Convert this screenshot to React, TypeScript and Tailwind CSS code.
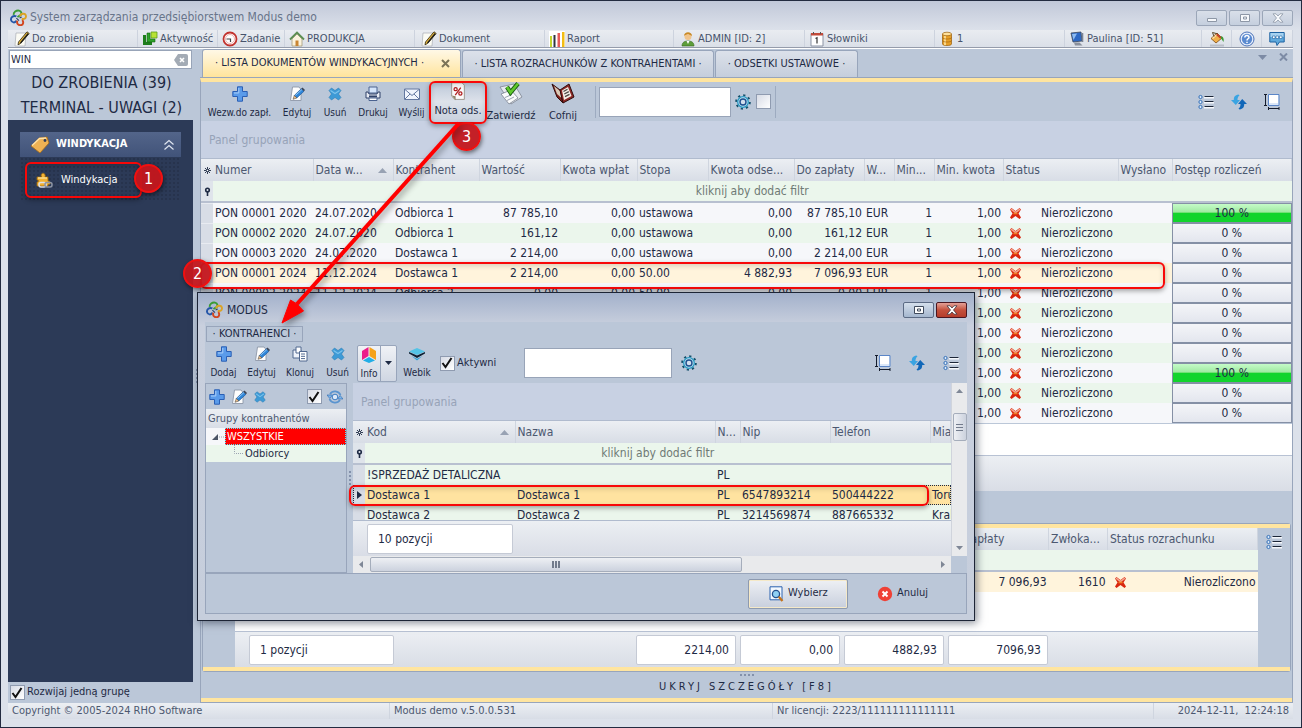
import React from "react";

/* ---------- small drawings ---------- */

type IconProps = { className?: string };

const Logo = ({ className = "size-4" }: IconProps) => (
  <svg viewBox="0 0 16 16" className={className} fill="none" strokeWidth="1.800">
    <path d="M3.500 5.500C3 3 6 1 8.500 1.500 11 2 11.500 4.500 9.500 6L7 7.500" stroke="#3a9b35" />
    <path d="M6 7C3 5.500.5 8 1 10.500c.5 2.500 4 3 5 .5" stroke="#2456a8" />
    <path d="M9.500 7C10 4 14.500 3.500 15 6.500c.3 2.500-2 3.500-4 2.500" stroke="#dba325" />
    <path d="M7 11c-1 2.500.5 4.500 3 4.300 2.700-.3 3-3.300 1.500-4.800" stroke="#d2451e" />
    <path d="M6 8.500 8.500 11M9 8.500l2-1" stroke="#2b3d66" strokeWidth="1" />
  </svg>
);

const NoteIcon = ({ className = "size-4" }: IconProps) => (
  <svg viewBox="0 0 16 16" className={className}>
    <path d="M2 2h10l-1 13H1z" fill="#fbfbf4" stroke="#a9adb5" strokeWidth=".7" />
    <path d="M13 .8 15.200 2.500 6.500 12.500 4 13.800 4.500 11z" fill="#e8b93c" stroke="#2c2410" strokeWidth=".8" />
    <path d="M14.200 2.500 6.500 12" stroke="#1d1d1d" strokeWidth="1.200" />
  </svg>
);

const BlocksIcon = () => (
  <svg viewBox="0 0 16 16" className="size-4">
    <path d="M1 4v10h9v-3H4V4z" fill="#1d7d1c" />
    <path d="M5 2v9h8V8H8V2z" fill="#2fa32b" stroke="#11610f" strokeWidth=".6" />
    <path d="M9 1h6v6H9z" fill="#b8e234" stroke="#5b9c1c" strokeWidth=".8" />
  </svg>
);

const ClockIcon = () => (
  <svg viewBox="0 0 16 16" className="size-4">
    <circle cx="8" cy="8" r="6.500" fill="#fff" stroke="#c2332e" strokeWidth="1.800" />
    <circle cx="8" cy="8" r="4.500" fill="none" stroke="#e8a19e" strokeWidth=".8" />
    <path d="M4.500 8H8.500V11" fill="none" stroke="#444" strokeWidth="1.200" />
  </svg>
);

const HouseIcon = () => (
  <svg viewBox="0 0 16 16" className="size-4">
    <path d="M3 8v7h10V8L8 3z" fill="#fbf3dd" stroke="#9c8f6a" strokeWidth=".7" />
    <path d="M1 8.500 8 1.500l7 7" fill="none" stroke="#5d8f52" strokeWidth="1.800" />
    <path d="M6.500 9.500h3V15h-3z" fill="#c98532" />
  </svg>
);

const BarsIcon = () => (
  <svg viewBox="0 0 16 16" className="size-4">
    <path d="M0 0h16v16H0z" fill="#fff" />
    <path d="M1 5h2v11H1z" fill="#c3d52c" />
    <path d="M4.500 4h2v12h-2z" fill="#2e3440" />
    <path d="M8.500 2h2.500v14H8.500z" fill="#e55b5b" />
    <path d="M13 1h2.500v15H13z" fill="#f2bd14" />
  </svg>
);

const UserIcon = () => (
  <svg viewBox="0 0 16 16" className="size-4">
    <path d="M2 15c0-4 3-5 6-5s6 1 6 5z" fill="#5d9e3a" stroke="#35671d" strokeWidth=".6" />
    <circle cx="8" cy="5.500" r="3.500" fill="#f0c48c" />
    <path d="M4 5c0-5 8-5 8 0-2-1-3-2-4-2S5 4 4 5z" fill="#c98a26" />
    <path d="M6.500 10 8 13l1.500-3z" fill="#fff" />
  </svg>
);

const CalendarIcon = () => (
  <svg viewBox="0 0 16 16" className="size-4">
    <path d="M2 2.500h12V15H2z" fill="#fff" stroke="#8b93a4" />
    <path d="M2 2h12v2.500H2z" fill="#c34b3a" />
    <path d="M6.500 7.500 8 6.800V12.500" fill="none" stroke="#333" strokeWidth="1.200" />
    <path d="M4.500 1v2M11.500 1v2" stroke="#555" />
  </svg>
);

const DatabaseIcon = () => (
  <svg viewBox="0 0 16 16" className="size-4">
    <path d="M3.500 3v10c0 2 9 2 9 0V3z" fill="#e79f27" stroke="#9a5e0b" strokeWidth=".7" />
    <path d="M6 4v10" stroke="#ffe6a3" strokeWidth="1.600" />
    <ellipse cx="8" cy="3" rx="4.500" ry="1.800" fill="#ffe09a" stroke="#9a5e0b" strokeWidth=".7" />
    <path d="M3.500 6.500c0 2 9 2 9 0M3.500 9.500c0 2 9 2 9 0" fill="none" stroke="#9a5e0b" strokeWidth=".6" />
  </svg>
);

const MonitorIcon = () => (
  <svg viewBox="0 0 16 16" className="size-4">
    <path d="M2 2 12 1l1 9-9 1z" fill="#2d68c4" stroke="#3c475b" strokeWidth=".8" />
    <path d="M3 3 8 2.500 4.500 9z" fill="#8ebcf2" />
    <path d="M5 11.500h5.500l3 3H6z" fill="#8a909c" />
    <path d="M12.800 2h1.500v9h-1.500z" fill="#7b8494" />
  </svg>
);

const BucketIcon = () => (
  <svg viewBox="0 0 16 16" className="size-4">
    <path d="M1 13.500h14v2H1z" fill="#b9bec8" />
    <path d="M2 7.500 8 2l5 5-6 5z" fill="#f0b04a" stroke="#7d4a14" strokeWidth=".8" />
    <path d="M3.500 7.500 8 3.500" stroke="#ffe3ac" strokeWidth="1.400" />
    <path d="M5 5.500 3.500 1.500 9 3" fill="none" stroke="#5b4a2b" />
    <path d="M12 5c3 1 3 4 2.500 6-1-1-1.500-3-3-4z" fill="#3a9b35" />
    <path d="M8.500 2.500l4 4-1.500 1-4-3.500z" fill="#c2452b" />
  </svg>
);

const HelpIcon = () => (
  <svg viewBox="0 0 16 16" className="size-4">
    <circle cx="8" cy="8" r="7" fill="#e7eefb" stroke="#4a72b8" />
    <circle cx="8" cy="8" r="5.200" fill="#5a8ad0" />
    <path d="M5.800 6.500C6 3.800 10.200 4 10 6.500 9.900 7.800 8 7.800 8 9.500M8 10.700V12" fill="none" stroke="#fff" strokeWidth="1.500" />
  </svg>
);

const ChatIcon = () => (
  <svg viewBox="0 0 16 16" className="size-4">
    <path d="M.8 1.500h14.400v9.500h-4.700L8 14.500 7 11H.8z" fill="#5fa9dc" stroke="#1e63a2" />
    <path d="M1.500 2h13v4h-13z" fill="#a6d2f0" />
    <path d="M3.500 5h2.500v2.500H3.500zM7 5h2.500v2.500H7zM10.500 5H13v2.500h-2.500z" fill="#fff" stroke="#1e63a2" strokeWidth=".6" />
  </svg>
);

const PlusIcon = ({ className = "size-4" }: IconProps) => (
  <svg viewBox="0 0 16 16" className={className}>
    <path d="M5.500 .8h5v4.700h4.700v5h-4.700v4.700h-5v-4.700H.8v-5h4.700z" fill="#5a9bea" stroke="#2a5fb4" />
    <path d="M6.800 2v5H2" fill="none" stroke="#a8cdf7" />
  </svg>
);

const EditIcon = ({ className = "size-4" }: IconProps) => (
  <svg viewBox="0 0 16 16" className={className}>
    <path d="M3.500 1H10l2 2.500V14.500H1.500z" fill="#fdfdfd" stroke="#8d97a8" strokeWidth=".9" />
    <path d="M12.300 2.700 15 5.200 7.800 12 5.300 9.500z" fill="#2e86d9" stroke="#174f91" strokeWidth=".6" />
    <path d="M6.500 9.300 13 3.500" stroke="#8cc4f5" />
    <path d="M5.300 9.500 7.800 12 4 13.300z" fill="#f3c58d" stroke="#333" strokeWidth=".5" />
    <path d="M12.300 2.700 13.500 1.500 16 4l-1 1.200z" fill="#3a4558" />
  </svg>
);

const DeleteIcon = ({ className = "size-4" }: IconProps) => (
  <svg viewBox="0 0 16 16" className={className}>
    <path
      d="M2 4.500 4.500 2 8 4.500l3.500-2.500L14 4.500 11.500 8l2.500 3.500-2.500 2.500L8 11.500 4.500 14 2 11.500 4.500 8z"
      fill="#3d9ad6"
      stroke="#2c7db5"
      strokeWidth=".6"
    />
    <path d="M3.500 4.500 8 7.500l4.500-3" fill="none" stroke="#7cc3ec" strokeWidth="1.200" />
  </svg>
);

const PrinterIcon = ({ className = "size-4" }: IconProps) => (
  <svg viewBox="0 0 16 16" className={className}>
    <path d="M4 1h8v6H4z" fill="#d4e4fa" stroke="#4a628f" />
    <path d="M1 6h2l1 2h8l1-2h2v6H1z" fill="#e7ebf3" stroke="#2f4169" />
    <path d="M4 9.500h8V11H4z" fill="#2f4169" />
    <path d="M4 12h8v2.500H4z" fill="#fff" stroke="#4a628f" />
  </svg>
);

const MailIcon = ({ className = "size-4" }: IconProps) => (
  <svg viewBox="0 0 16 16" className={className}>
    <path d="M.5 3h15v10.500H.5z" fill="#f1f5fc" stroke="#6478a0" />
    <path d="M1 3.500 8 9.500l7-6M1 13l5-5M15 13l-5-5" fill="none" stroke="#6478a0" />
  </svg>
);

const PercentIcon = ({ className = "size-6" }: IconProps) => (
  <svg viewBox="0 0 24 24" className={className}>
    <path d="M4 1h13l3 3v18H8l-4-4z" fill="#fbfbfb" stroke="#8b8577" />
    <path d="M4 17l5 1v5z" fill="#8f8468" />
    <circle cx="9" cy="9" r="2" fill="none" stroke="#b01f1f" strokeWidth="1.600" />
    <circle cx="15" cy="14.500" r="2" fill="none" stroke="#b01f1f" strokeWidth="1.600" />
    <path d="M15.500 7 8.500 16.500" stroke="#b01f1f" strokeWidth="1.600" />
  </svg>
);

const ApproveIcon = ({ className = "size-6" }: IconProps) => (
  <svg viewBox="0 0 24 24" className={className}>
    <path d="M1 5 15 2l8 13-11 7z" fill="#e6e9ef" stroke="#7c8492" strokeWidth=".8" />
    <path d="M2 12l10-4 7 8-9 6z" fill="#fafbfc" stroke="#7c8492" strokeWidth=".8" />
    <path d="M6 15.500l7-3M8 18.500l7-3.500" stroke="#9aa2b0" />
    <path d="M8 5 11.500 10.500 19 1.500" fill="none" stroke="#1b5e12" strokeWidth="4.400" />
    <path d="M8 5 11.500 10.500 19 1.500" fill="none" stroke="#5fc92c" strokeWidth="2.600" />
  </svg>
);

const BookIcon = ({ className = "size-6" }: IconProps) => (
  <svg viewBox="0 0 24 24" className={className}>
    <path d="M1 2 9 8l3 13L6 15z" fill="#7c1f1c" stroke="#2f0d0c" />
    <path d="M3 4 9 9l1.500 7L6 12z" fill="#d9c9b6" />
    <path d="M9 8 18 2l5 13-11 6z" fill="#8d2825" stroke="#2f0d0c" />
    <path d="M11 8.500 17 5l3.500 9-7.500 4z" fill="#f4f0e8" />
    <path d="M12.500 9.500l4-2.200M13.300 12l4.500-2.300M14 14.600l4.500-2.300" stroke="#4e4a45" strokeWidth="1.300" />
  </svg>
);

const GearIcon = () => (
  <svg viewBox="0 0 16 16" className="size-4">
    <circle cx="8" cy="8" r="6.800" fill="none" stroke="#14506b" strokeWidth="2" strokeDasharray="2.200 3.140" />
    <circle cx="8" cy="8" r="5.300" fill="#bfe3f2" stroke="#2a9ac4" strokeWidth="1.300" />
    <circle cx="8" cy="8" r="3" fill="#d3dfed" stroke="#1e4f8e" strokeWidth="1.400" />
  </svg>
);

const ListIcon = () => (
  <svg viewBox="0 0 16 16" className="size-4">
    <g fill="#dcebfb" stroke="#3470b8">
      <circle cx="2.500" cy="3" r="1.600" />
      <circle cx="2.500" cy="8" r="1.600" />
      <circle cx="2.500" cy="13" r="1.600" />
    </g>
    <path d="M6 3.500h10M6 8.500h10M6 13.500h10" stroke="#f5f8fc" strokeWidth="2" />
    <path d="M6.500 2.500h9M6.500 7.500h9M6.500 12.500h9" stroke="#1c2638" />
  </svg>
);

const RefreshIcon = () => (
  <svg viewBox="0 0 16 16" className="size-4">
    <path d="M7.500 .5C4 1 2.700 3 2.800 6H0l4.800 5L9 6H6.500c0-2 .5-3.500 2-4.500z" fill="#3aa4e2" />
    <path d="M8.500 15.500c3.500-.5 4.800-2.500 4.700-5.500H16l-4.800-5L7 10h2.500c0 2-.5 3.500-2 4.500z" fill="#1167b8" />
  </svg>
);

const SizeIcon = () => (
  <svg viewBox="0 0 16 16" className="size-4">
    <path d="M4.500 .5h10.500v11H4.500z" fill="#dbe7f8" stroke="#5b86c8" />
    <path d="M5 1h9v8H5z" fill="#fff" />
    <path d="M0 .5h3M0 11.500h3M1.500 .5V11.500M4.500 13v3M15 13v3M4.500 14.500h10.500" stroke="#141c2c" fill="none" />
  </svg>
);

const TagIcon = () => (
  <svg viewBox="0 0 20 20" className="size-5">
    <path d="M1 11 9 3l8-1 2 6-9 10z" fill="#eeb254" stroke="#a56a17" strokeWidth=".8" />
    <path d="M2 10.500 9.500 3.500 16 3" fill="none" stroke="#ffe3ac" strokeWidth="1.300" />
    <circle cx="15" cy="5.500" r="1.400" fill="#2d3b58" />
  </svg>
);

const PluginIcon = () => (
  <svg viewBox="0 0 18 18" className="size-[18px]">
    <path d="M2 6h4.500c-2-5 5-5 3.500 0H13v4c3 0 3 4 0 3.500V15H2v-4c2 0 2-2 0-2z" fill="#f3b232" stroke="#9f6a0d" strokeWidth=".8" />
    <path d="M3 7h9" stroke="#ffe39d" strokeWidth="1.300" />
    <rect x="4" y="11.500" width="7" height="4.500" rx="2" fill="none" stroke="#dde1e8" strokeWidth="1.500" />
    <rect x="10" y="11.500" width="7" height="4.500" rx="2" fill="none" stroke="#8d95a5" strokeWidth="1.500" />
  </svg>
);

const CloneIcon = () => (
  <svg viewBox="0 0 16 16" className="size-4">
    <path d="M1 4h8v8H1z" fill="#eef3fb" stroke="#51688f" />
    <path d="M4 1h5v6H4z" fill="#fff" stroke="#51688f" />
    <path d="M7.500 5.500h7.500V15H7.500z" fill="#fff" stroke="#51688f" />
    <path d="M9 8h4M9 10.300h4M9 12.600h4" stroke="#51688f" />
  </svg>
);

const InfoIcon = () => (
  <svg viewBox="0 0 16 16" className="size-4">
    <path d="M7.500 0v9L1 13V4z" fill="#ec1c8a" />
    <path d="M8.500 0v9l6.500 4V4z" fill="#f5a21a" />
    <path d="M8 10 14 13.500 8 16 2 13.500z" fill="#22aee6" />
  </svg>
);

const LayersIcon = () => (
  <svg viewBox="0 0 16 16" className="size-4">
    <path d="M0 5.500 8 2l8 3.500L8 9z" fill="#53c3e6" />
    <path d="M0 6l8 3.500L16 6v1.500L8 12 0 7.500z" fill="#0d2033" />
    <path d="M2.500 10 8 12.800l5.500-2.800L8 14.500z" fill="#2fa0d6" />
  </svg>
);

const SyncIcon = () => (
  <svg viewBox="0 0 16 16" className="size-4">
    <path d="M13.500 6A6 6 0 0 0 3 5M2.500 10A6 6 0 0 0 13 11" fill="none" stroke="#5a94cf" strokeWidth="1.800" />
    <path d="M0 6h5.500L2.800 9.500zM16 10h-5.500l2.700-3.500z" fill="#7db6ea" stroke="#2c66ad" strokeWidth=".6" />
    <circle cx="8" cy="8" r="2.800" fill="#dce9f8" stroke="#3d7cc2" />
  </svg>
);

const FindIcon = () => (
  <svg viewBox="0 0 16 16" className="size-4">
    <path d="M2 .8h12v13H2z" fill="#f3f8fe" stroke="#2a62b0" />
    <circle cx="8" cy="8" r="3.600" fill="#8fd0f4" stroke="#24508d" strokeWidth="1.300" />
    <path d="M10.800 10.800 14.500 15" stroke="#c4731c" strokeWidth="2.200" />
  </svg>
);

const CancelIcon = () => (
  <svg viewBox="0 0 16 16" className="size-4">
    <circle cx="8" cy="8" r="7.200" fill="#ef4136" />
    <path d="M5.500 5.500l5 5M10.500 5.500l-5 5" stroke="#fff" strokeWidth="2" />
  </svg>
);

const RedX = () => (
  <svg viewBox="0 0 11 11" className="block h-[11px] w-[11px]">
    <path d="M0 1.500 1.500 0l4 3 4-3L11 1.500 8.500 5.500 11 9.500 9.500 11l-4-3-4 3L0 9.500l2.500-4z" fill="#d9260f" />
    <path d="M1 1.200 5.500 4.500 10 1.200" fill="none" stroke="#f3a48c" strokeWidth="1.600" />
    <path d="M3.500 5.500h4" stroke="#ef7d22" strokeWidth="1.600" />
  </svg>
);

const Star = () => (
  <svg viewBox="0 0 9 9" className="mx-auto block h-[9px] w-[9px]" stroke="#1e2a44" strokeWidth=".9">
    <path d="M4.500 1v7M1 4.500h7M2 2l5 5M7 2 2 7" fill="none" />
    <circle cx="4.500" cy="4.500" r=".8" fill="#fff" stroke="none" />
  </svg>
);

const FilterKey = () => (
  <svg viewBox="0 0 9 9" className="mx-auto block h-[9px] w-[9px]">
    <circle cx="4.500" cy="3" r="1.800" fill="none" stroke="#1e2a44" strokeWidth="1.600" />
    <path d="M4.500 5v4" stroke="#1e2a44" strokeWidth="1.600" />
  </svg>
);

const SortUp = () => (
  <svg viewBox="0 0 9 5" className="h-[5px] w-[9px]">
    <path d="M0 5 4.500 0 9 5z" fill="#98a2b3" />
  </svg>
);

/* ---------- shared controls ---------- */

const toolText = "text-[#1e2a44]";

function ToolButton({ label, icon, className = "" }: { label: string; icon: React.ReactNode; className?: string }) {
  return (
    <button type="button" className={`flex shrink-0 flex-col items-center gap-1 text-[10px] leading-[14px] whitespace-nowrap ${toolText} ${className}`}>
      {icon}
      {label}
    </button>
  );
}

function CheckBox({ id, label, checked = false }: { id: string; label: string; checked?: boolean }) {
  return (
    <span className="grid size-4 shrink-0 place-items-center">
      <input
        id={id}
        type="checkbox"
        aria-label={label}
        defaultChecked={checked}
        className="peer col-start-1 row-start-1 size-[15px] appearance-none border border-[#8f9bb0] bg-linear-to-br from-[#d8dce6] to-white"
      />
      <svg viewBox="0 0 12 12" className="pointer-events-none col-start-1 row-start-1 hidden size-3 peer-checked:block">
        <path d="M1.500 6 4.500 10 10.500 1" fill="none" stroke="#111" strokeWidth="2" />
      </svg>
    </span>
  );
}

const Grip = () => (
  <span className="flex flex-col gap-[2px]">
    {[0, 1, 2, 3].map((n) => (
      <span key={n} className="size-[2px] bg-[#8391ab]" />
    ))}
  </span>
);

/* ---------- top of the window ---------- */

const menu = [
  { label: "Do zrobienia", icon: <NoteIcon />, pad: "pl-[6px]" },
  { label: "Aktywność", icon: <BlocksIcon />, pad: "pl-[4px]" },
  { label: "Zadanie", icon: <ClockIcon />, pad: "pl-[4px]" },
  { label: "PRODUKCJA", icon: <HouseIcon />, pad: "pl-[4px]" },
  { label: "Dokument", icon: <NoteIcon />, pad: "pl-[6px]" },
  { label: "Raport", icon: <BarsIcon />, pad: "pl-[4px]" },
  { label: "ADMIN [ID: 2]", icon: <UserIcon />, pad: "pl-[6px]" },
  { label: "Słowniki", icon: <CalendarIcon />, pad: "pl-[4px]" },
  { label: "1", icon: <DatabaseIcon />, pad: "pl-[4px]" },
  { label: "Paulina [ID: 51]", icon: <MonitorIcon />, pad: "pl-[4px]" },
];

function TitleBar() {
  return (
    <header className="flex h-[29px] items-start bg-linear-to-b from-[#c1c8d9] to-[#dce1ea] pr-2 pl-[9px]">
      <Logo className="mt-2 size-[17px]" />
      <h1 className="mt-[7px] ml-[3px] flex-1 text-xs leading-[18px] text-[#68748a]">System zarządzania przedsiębiorstwem Modus demo</h1>
      <div className="mt-[9px] flex gap-[2px]">
        {["Minimalizuj", "Maksymalizuj", "Zamknij"].map((name, i) => (
          <button
            key={name}
            type="button"
            aria-label={name}
            className="flex h-4 w-[31px] items-center justify-center rounded-[2px] border border-[#9ba6b8] bg-linear-to-b from-[#d9dfe9] to-[#c5cfde]"
          >
            <svg viewBox="0 0 12 10" className="h-[10px] w-3" fill="#f7f9fc" stroke="#8d97a6">
              {i === 0 && <path d="M1.500 5.500h9v3h-9z" />}
              {i === 1 && <path d="M1.500 1.500h9v7h-9zM4.500 4h3v2h-3z" />}
              {i === 2 && <path d="M1 .8h3L6 3l2-2.200h3L7.500 5 11 9.200H8L6 7 4 9.200H1L4.500 5z" strokeWidth=".8" />}
            </svg>
          </button>
        ))}
      </div>
    </header>
  );
}

function MenuBar() {
  return (
    <nav className="mr-2 ml-[7px] grid h-[18px] grid-cols-[130fr_80fr_67fr_130fr_130fr_129fr_131fr_130fr_130fr_137fr_30fr_30fr_31fr] border-b border-[#959cab] bg-linear-to-b from-[#e9ecf1] to-[#dbe0e8]">
      {menu.map((m) => (
        <button key={m.label} type="button" className={`flex items-center gap-[2px] overflow-hidden border-r border-[#cdd3de] text-[11px] leading-4 whitespace-nowrap text-[#47536b] ${m.pad}`}>
          {m.icon}
          {m.label}
        </button>
      ))}
      {[
        { name: "Motyw", icon: <BucketIcon /> },
        { name: "Pomoc", icon: <HelpIcon /> },
        { name: "Czat", icon: <ChatIcon /> },
      ].map((b) => (
        <button key={b.name} type="button" aria-label={b.name} className="flex items-center justify-center border-r border-[#cdd3de]">
          {b.icon}
        </button>
      ))}
    </nav>
  );
}

/* ---------- left side ---------- */

function Sidebar() {
  return (
    <aside className="flex w-[185px] shrink-0 flex-col">
      <div className="mx-px mt-px flex h-[19px] items-center border border-[#98a4b8] bg-white pr-[3px]">
        <input aria-label="Szukaj w menu" defaultValue="WIN" className={`min-w-0 flex-1 pl-px text-[11px] leading-4 outline-none ${toolText}`} />
        <button type="button" aria-label="Wyczyść">
          <svg viewBox="0 0 14 12" className="h-3 w-[14px]">
            <path d="M4 0h8a2 2 0 0 1 2 2v8a2 2 0 0 1-2 2H4L0 6z" fill="#a3abb5" />
            <path d="M6 4l4 4M10 4l-4 4" stroke="#fff" strokeWidth="1.600" />
          </svg>
        </button>
      </div>
      <div className={`flex flex-col items-center pt-px pl-[2px] text-base leading-[25px] whitespace-nowrap ${toolText}`}>
        <span>DO ZROBIENIA (39)</span>
        <span>TERMINAL - UWAGI (2)</span>
      </div>
      <div className="flex-1 bg-[#2c3a57] px-3 pt-3">
        <button type="button" className="flex h-[25px] w-full items-center bg-linear-to-b from-[#53658a] to-[#415379] pr-[6px] pl-[10px] text-[11px] font-bold text-white">
          <TagIcon />
          <span className="ml-[6px] flex-1 text-left">WINDYKACJA</span>
          <svg viewBox="0 0 12 12" className="size-3" fill="none" stroke="#dfe5f0" strokeWidth="1.200">
            <path d="M1.500 5.500 6 1.500l4.500 4M1.500 10.500l4.500-4 4.500 4" />
          </svg>
        </button>
        <div className="h-[44px] bg-[radial-gradient(#27334d_1px,transparent_1px)] bg-size-[4px_4px] pt-[14px] pl-[15px]">
          <a href="#windykacja" className="flex items-center gap-2 text-[11px] leading-[18px] text-white">
            <PluginIcon />
            Windykacja
          </a>
        </div>
      </div>
      <label htmlFor="one-group" className={`flex h-[21px] items-center gap-[2px] pl-px text-[11px] ${toolText}`}>
        <CheckBox id="one-group" label="Rozwijaj jedną grupę" checked />
        Rozwijaj jedną grupę
      </label>
    </aside>
  );
}

/* ---------- document list ---------- */

interface DocRow {
  no: string;
  date: string;
  who: string;
  value: string;
  paid: string;
  rate: string;
  interest: string;
  due: string;
  cur: string;
  min: string;
  progress: number;
}

const blank: DocRow = { no: "", date: "", who: "", value: "", paid: "", rate: "", interest: "", due: "", cur: "", min: "", progress: 0 };

const docs: DocRow[] = [
  { no: "PON 00001 2020", date: "24.07.2020", who: "Odbiorca 1", value: "87 785,10", paid: "0,00", rate: "ustawowa", interest: "0,00", due: "87 785,10", cur: "EUR", min: "1", progress: 100 },
  { no: "PON 00002 2020", date: "24.07.2020", who: "Odbiorca 1", value: "161,12", paid: "0,00", rate: "ustawowa", interest: "0,00", due: "161,12", cur: "EUR", min: "1", progress: 0 },
  { no: "PON 00003 2020", date: "24.07.2020", who: "Dostawca 1", value: "2 214,00", paid: "0,00", rate: "ustawowa", interest: "0,00", due: "2 214,00", cur: "EUR", min: "1", progress: 0 },
  { no: "PON 00001 2024", date: "11.12.2024", who: "Dostawca 1", value: "2 214,00", paid: "0,00", rate: "50.00", interest: "4 882,93", due: "7 096,93", cur: "EUR", min: "1", progress: 0 },
  { no: "PON 00002 2024", date: "11.12.2024", who: "Odbiorca 2", value: "0,00", paid: "0,00", rate: "50.00", interest: "0,00", due: "0,00", cur: "EUR", min: "1", progress: 0 },
  blank,
  blank,
  blank,
  { ...blank, progress: 100 },
  blank,
  blank,
];

const docHeads = ["Numer", "Data w...", "Kontrahent", "Wartość", "Kwota wpłat", "Stopa", "Kwota odse...", "Do zapłaty", "W...", "Min...", "Min. kwota", "Status", "Wysłano", "Postęp rozliczeń"];

const headCell = "overflow-hidden border-r border-[#cfd5df] p-0 px-[2px] text-left font-normal whitespace-nowrap";

function Progress({ value }: { value: number }) {
  return (
    <div className="flex h-5 items-center justify-center border border-[#8590a5] bg-linear-to-b from-[#f4f5f8] to-[#e3e6ee]">
      <div
        className={
          value === 100
            ? "h-full w-full bg-linear-to-b from-[#c5fbc8] from-0% via-[#a0eaa2] via-45% to-[#12d42c] to-50% text-center leading-[18px]"
            : "leading-[18px]"
        }
      >
        {value} %
      </div>
    </div>
  );
}

function DocTable() {
  const num = "p-0 pr-[2px] text-right";
  const txt = "p-0 pl-[2px]";
  return (
    <table className="w-full table-fixed border-collapse text-xs whitespace-nowrap text-[#1e2a44]">
      <colgroup>
        <col className="w-[12px]" />
        <col className="w-[100px]" />
        <col className="w-[80px]" />
        <col className="w-[86px]" />
        <col className="w-[81px]" />
        <col className="w-[77px]" />
        <col className="w-[71px]" />
        <col className="w-[86px]" />
        <col className="w-[70px]" />
        <col className="w-[30px]" />
        <col className="w-[40px]" />
        <col className="w-[69px]" />
        <col className="w-[115px]" />
        <col className="w-[54px]" />
        <col />
      </colgroup>
      <thead className="text-[#4c5870]">
        <tr className="h-[22px] bg-linear-to-b from-[#eceff3] to-[#d8dde6]">
          <th aria-label="Zaznaczenie" className="p-0">
            <Star />
          </th>
          {docHeads.map((h) => (
            <th key={h} className={headCell}>
              {h === "Data w..." ? (
                <span className="flex items-center justify-between pr-1">
                  {h}
                  <SortUp />
                </span>
              ) : (
                h
              )}
            </th>
          ))}
        </tr>
        <tr className="h-5 bg-[#ebf6ec]">
          <td className="bg-[#dfe4eb] p-0">
            <FilterKey />
          </td>
          <td colSpan={14} className="p-0 text-center text-[#6f7a75]">
            kliknij aby dodać filtr
          </td>
        </tr>
        <tr className="h-[2px] bg-[#b8c0d0]">
          <td colSpan={15} className="h-[2px] p-0" />
        </tr>
      </thead>
      <tbody>
        {docs.map((d, i) => (
          <tr key={i} className={`h-5 ${i === 3 ? "bg-[#fff4dc]" : i % 2 ? "bg-[#ebf6ec]" : "bg-[#f6f7fa]"}`}>
            <td className="border-y border-[#e8ebf1] bg-[#d8dde6] p-0" />
            <td className={txt}>{d.no}</td>
            <td className={txt}>{d.date}</td>
            <td className={txt}>{d.who}</td>
            <td className={num}>{d.value}</td>
            <td className={num}>{d.paid}</td>
            <td className={txt}>{d.rate}</td>
            <td className={num}>{d.interest}</td>
            <td className={num}>{d.due}</td>
            <td className={txt}>{d.cur}</td>
            <td className={num}>{d.min}</td>
            <td className={num}>1,00</td>
            <td className="p-0 pl-[7px]">
              <span className="flex items-center gap-5">
                <RedX />
                Nierozliczono
              </span>
            </td>
            <td className="p-0" />
            <td className="p-0">
              <Progress value={d.progress} />
            </td>
          </tr>
        ))}
      </tbody>
    </table>
  );
}

const bigTool = "flex shrink-0 flex-col items-center text-[11px] leading-5 whitespace-nowrap";

function Toolbar() {
  return (
    <div className="flex h-[39px] items-start overflow-hidden bg-[#bbc7d8] pr-3">
      <ToolButton label="Wezw.do zapł." icon={<PlusIcon />} className="w-[77px] pt-1" />
      <ToolButton label="Edytuj" icon={<EditIcon />} className="w-[38px] pt-1" />
      <ToolButton label="Usuń" icon={<DeleteIcon />} className="w-[38px] pt-1" />
      <ToolButton label="Drukuj" icon={<PrinterIcon />} className="w-[38px] pt-1" />
      <ToolButton label="Wyślij" icon={<MailIcon />} className="w-[39px] pt-1" />
      <button type="button" className={`h-[39px] w-[54px] bg-linear-to-b from-[#bbc7d8] via-[#dde2ea] to-[#c9d1de] ${bigTool} ${toolText}`}>
        <PercentIcon />
        Nota ods.
      </button>
      <button type="button" className={`w-[52px] ${bigTool} ${toolText}`}>
        <ApproveIcon />
        Zatwierdź
      </button>
      <button type="button" className={`w-[52px] ${bigTool} ${toolText}`}>
        <BookIcon />
        Cofnij
      </button>
      <div className="ml-[6px] flex h-8 items-center self-center border-x border-[#9dabc0] pr-1 pl-[3px]">
        <input aria-label="Szukaj dokumentu" className="h-[30px] w-[132px] border border-[#98a4b8] bg-white px-1 text-xs outline-none" />
        <button type="button" aria-label="Ustawienia szukania" className="mx-1">
          <GearIcon />
        </button>
        <CheckBox id="doc-all" label="Wszystkie" />
      </div>
      <div className="ml-auto flex gap-[17px] self-center">
        <button type="button" aria-label="Kolumny"><ListIcon /></button>
        <button type="button" aria-label="Odśwież"><RefreshIcon /></button>
        <button type="button" aria-label="Dopasuj"><SizeIcon /></button>
      </div>
    </div>
  );
}

function Tabs() {
  const idle = "h-[27px] rounded-t-[3px] border border-b-0 border-[#98a5bb] bg-linear-to-b from-[#dce1ea] to-[#c5cedc]";
  return (
    <div role="tablist" className={`flex h-[29px] items-end gap-px border-b border-[#98a5bb] pl-[2px] text-[11px] whitespace-nowrap ${toolText}`}>
      <div role="tab" aria-selected="true" className="flex h-7 w-[259px] items-center justify-between rounded-t-[3px] border border-b-0 border-[#98a5bb] bg-linear-to-b from-[#fff8e6] to-[#ffe49b] pr-[10px] pl-3">
        <span>· LISTA DOKUMENTÓW WINDYKACYJNYCH ·</span>
        <button type="button" aria-label="Zamknij zakładkę">
          <svg viewBox="0 0 9 9" className="h-[9px] w-[9px]">
            <path d="M1 1l7 7M8 1 1 8" stroke="#7b7357" strokeWidth="2" />
          </svg>
        </button>
      </div>
      <button type="button" role="tab" className={`w-[252px] ${idle}`}>· LISTA ROZRACHUNKÓW Z KONTRAHENTAMI ·</button>
      <button type="button" role="tab" className={`w-[143px] ${idle}`}>· ODSETKI USTAWOWE ·</button>
      <div className="mr-[5px] mb-4 ml-auto flex items-center gap-3">
        <button type="button" aria-label="Lista zakładek">
          <svg viewBox="0 0 9 5" className="h-[5px] w-[9px]"><path d="M0 0h9L4.500 5z" fill="#7d8ba5" /></svg>
        </button>
        <button type="button" aria-label="Zamknij">
          <svg viewBox="0 0 9 8" className="h-2 w-[9px]"><path d="M1 .5l7 7M8 .5l-7 7" stroke="#7d8ba5" strokeWidth="2" /></svg>
        </button>
      </div>
    </div>
  );
}

/* ---------- details under the list ---------- */

const sum = "flex h-[30px] items-center rounded-[2px] border border-[#c5cad5] bg-white";

function Details() {
  return (
    <section className="mx-px rounded-[3px] border border-[#98a5bb]">
      <div className="border-y-4 border-[#ffe5a0] px-8">
        <div className="relative">
          <table className="w-full table-fixed border-collapse bg-white text-xs whitespace-nowrap text-[#1e2a44]">
            <colgroup>
              <col />
              <col className="w-[104px]" />
              <col className="w-[59px]" />
              <col className="w-[150px]" />
            </colgroup>
            <thead className="text-[#4c5870]">
              <tr className="h-[22px] bg-linear-to-b from-[#eceff3] to-[#d8dde6]">
                <th aria-label="Dokument" className="p-0" />
                <th className={headCell}>Do zapłaty</th>
                <th className={headCell}>Zwłoka...</th>
                <th className={headCell}>Status rozrachunku</th>
              </tr>
              <tr className="h-5 bg-[#ebf6ec]">
                <td colSpan={4} className="p-0" />
              </tr>
              <tr className="h-[2px] bg-[#b8c0d0]">
                <td colSpan={4} className="h-[2px] p-0" />
              </tr>
            </thead>
            <tbody>
              <tr className="h-5 bg-[#fff4dc]">
                <td className="p-0" />
                <td className="p-0 pr-[2px] text-right">7 096,93</td>
                <td className="p-0 pr-[2px] text-right">1610</td>
                <td className="p-0 pr-[2px] pl-[7px]">
                  <span className="flex items-center justify-between">
                    <RedX />
                    Nierozliczono
                  </span>
                </td>
              </tr>
            </tbody>
          </table>
          <button type="button" aria-label="Kolumny szczegółów" className="absolute top-[6px] -right-6">
            <ListIcon />
          </button>
        </div>
        <div className="h-[39px] bg-white" />
        <div className={`flex h-9 items-center gap-1 border-t border-[#b8c2d4] bg-linear-to-b from-[#eceff3] to-[#d9dde6] pl-[14px] text-xs ${toolText}`}>
          <div className={`w-[145px] pl-[10px] ${sum}`}>1 pozycji</div>
          <div className="w-[234px]" />
          {["2214,00", "0,00", "4882,93", "7096,93"].map((v) => (
            <div key={v} className={`w-[100px] justify-end pr-[6px] ${sum}`}>{v}</div>
          ))}
        </div>
      </div>
    </section>
  );
}

/* ---------- customer picker ---------- */

const customers = [
  { kod: "!SPRZEDAŻ DETALICZNA", name: "", nip: "", tel: "", city: "" },
  { kod: "Dostawca 1", name: "Dostawca 1", nip: "6547893214", tel: "500444222", city: "Toruń" },
  { kod: "Dostawca 2", name: "Dostawca 2", nip: "3214569874", tel: "887665332", city: "Kraków" },
];

function GroupTree() {
  return (
    <div className="flex w-[142px] shrink-0 flex-col border border-[#98a5bb]">
      <div className="flex h-[25px] items-center gap-[6px] px-[3px]">
        <button type="button" aria-label="Dodaj grupę"><PlusIcon /></button>
        <button type="button" aria-label="Edytuj grupę"><EditIcon /></button>
        <button type="button" aria-label="Usuń grupę"><DeleteIcon className="size-[14px]" /></button>
        <span className="ml-auto flex items-center gap-[5px]">
          <CheckBox id="groups-all" label="Pokaż grupy" checked />
          <button type="button" aria-label="Odśwież grupy"><SyncIcon /></button>
        </span>
      </div>
      <div className="h-[19px] bg-linear-to-b from-[#eceff3] to-[#d8dde6] pl-[2px] text-[11px] leading-[19px] text-[#4c5870]">Grupy kontrahentów</div>
      <div className="flex h-[17px] items-center bg-[#f6f7fa] text-[11px] leading-[17px] text-white">
        <svg viewBox="0 0 19 9" className="h-[9px] w-[19px]">
          <path d="M12 2v6H6z" fill="#4c5566" />
          <path d="M13 5h6" stroke="#9aa2b0" strokeDasharray="1 1" />
        </svg>
        <span className="h-full flex-1 border border-dotted border-cyan-300 bg-[#ff0000] pl-px leading-[15px]">WSZYSTKIE</span>
      </div>
      <div className={`flex h-[17px] items-center gap-[2px] bg-[#ebf6ec] pl-7 text-[11px] leading-[17px] ${toolText}`}>
        <svg viewBox="0 0 9 17" className="h-[17px] w-[9px]"><path d="M.5 0v8.500H9" fill="none" stroke="#9aa2b0" strokeDasharray="1 1" /></svg>
        Odbiorcy
      </div>
    </div>
  );
}

function CustomerGrid() {
  return (
    <div className="flex min-w-0 flex-1 flex-col">
      <div className="h-[38px] border-b border-[#b0bbce] bg-[#c8d1e3] pl-2 text-xs leading-[38px] text-[#97a3b8]">Panel grupowania</div>
      <div className="h-[99px] overflow-hidden">
        <table className={`w-full table-fixed border-collapse text-xs whitespace-nowrap ${toolText}`}>
          <colgroup>
            <col className="w-[12px]" />
            <col className="w-[150px]" />
            <col className="w-[200px]" />
            <col className="w-[25px]" />
            <col className="w-[90px]" />
            <col className="w-[100px]" />
            <col />
          </colgroup>
          <thead className="text-[#4c5870]">
            <tr className="h-[22px] bg-linear-to-b from-[#eceff3] to-[#d8dde6]">
              <th aria-label="Zaznaczenie" className="p-0"><Star /></th>
              <th className={headCell}>
                <span className="flex items-center justify-between pr-1">Kod <SortUp /></span>
              </th>
              <th className={headCell}>Nazwa</th>
              <th className={headCell}>N...</th>
              <th className={headCell}>Nip</th>
              <th className={headCell}>Telefon</th>
              <th className={headCell}>Mia</th>
            </tr>
            <tr className="h-5 bg-[#ebf6ec]">
              <td className="bg-[#dfe4eb] p-0"><FilterKey /></td>
              <td colSpan={6} className="p-0 text-center text-[#6f7a75]">kliknij aby dodać filtr</td>
            </tr>
            <tr className="h-[2px] bg-[#b8c0d0]">
              <td colSpan={7} className="h-[2px] p-0" />
            </tr>
          </thead>
          <tbody>
            {customers.map((c, i) => (
              <tr key={c.kod} className={`h-5 ${i === 1 ? "bg-[#ffe3a0] outline outline-dotted outline-[#1e2a44] -outline-offset-1" : "bg-[#ebf6ec]"}`}>
                <td className="bg-[#d8dde6] p-0">
                  {i === 1 && (
                    <svg viewBox="0 0 5 8" className="mx-auto block h-2 w-[5px]"><path d="M0 0v8l5-4z" fill="#1e2a44" /></svg>
                  )}
                </td>
                <td className="p-0 pl-[2px]">{c.kod}</td>
                <td className="p-0 pl-[2px]">{c.name}</td>
                <td className="p-0 pl-[2px]">PL</td>
                <td className="p-0 pl-[2px]">{c.nip}</td>
                <td className="p-0 pl-[2px]">{c.tel}</td>
                <td className="overflow-hidden p-0 pl-[2px]">{c.city}</td>
              </tr>
            ))}
          </tbody>
        </table>
      </div>
      <div className={`flex h-9 items-center border-t border-[#b0bbce] bg-linear-to-b from-[#eceff3] to-[#d9dde6] pl-[14px] text-xs ${toolText}`}>
        <div className={`w-[146px] pl-[10px] ${sum}`}>10 pozycji</div>
      </div>
      <div className="flex h-[17px] items-center gap-[7px] bg-[#e9eaec] px-[6px]">
        <svg viewBox="0 0 4 7" className="h-[7px] w-1"><path d="M4 0v7L0 3.500z" fill="#7f8796" /></svg>
        <div className="flex h-[15px] w-[372px] items-center justify-center gap-px rounded-[2px] border border-[#a5adbb] bg-linear-to-b from-[#eef0f4] to-[#ccd2de]">
          {[0, 1, 2].map((n) => (
            <span key={n} className="h-[7px] w-[2px] bg-[#727b8c]" />
          ))}
        </div>
        <svg viewBox="0 0 4 7" className="ml-auto h-[7px] w-1"><path d="M0 0v7l4-3.500z" fill="#7f8796" /></svg>
      </div>
    </div>
  );
}

function CustomerDialog() {
  return (
    <section
      role="dialog"
      aria-label="MODUS"
      className="absolute top-[291px] left-[196px] flex w-[778px] flex-col border border-[#1d2536] bg-linear-to-b from-[#a3b1cb] via-[#c9d0de] via-10% to-[#c6cedc] px-[7px] pb-[6px] shadow-[2px_2px_8px_rgba(20,30,50,0.5)]"
    >
      <header className="flex h-[29px] items-center gap-1 pt-1 pl-px">
        <Logo className="size-[17px]" />
        <h2 className={`flex-1 text-xs ${toolText}`}>MODUS</h2>
        <button type="button" aria-label="Maksymalizuj okno" className="flex h-4 w-[31px] items-center justify-center rounded-[2px] border border-[#5c6b85] bg-linear-to-b from-[#d5dfec] to-[#a5b7cf]">
          <svg viewBox="0 0 12 10" className="h-[10px] w-3" fill="#fff" stroke="#3f4a5d"><path d="M1.500 1.500h9v7h-9zM4.500 4h3v2h-3z" /></svg>
        </button>
        <button type="button" aria-label="Zamknij okno" className="-ml-[2px] flex h-4 w-[31px] items-center justify-center rounded-[2px] border border-[#4a1620] bg-linear-to-b from-[#e3a097] via-[#c4503c] to-[#b53d2b]">
          <svg viewBox="0 0 12 10" className="h-[10px] w-3" fill="#fff" stroke="#43343b" strokeWidth=".8"><path d="M1 .8h3L6 3l2-2.200h3L7.500 5 11 9.200H8L6 7 4 9.200H1L4.500 5z" /></svg>
        </button>
      </header>

      <div className="bg-[#bbc7d8] pt-1">
        <button type="button" className={`ml-px flex h-4 w-[97px] items-center justify-center border border-[#98a5bb] text-[11px] whitespace-nowrap ${toolText}`}>· KONTRAHENCI ·</button>

        <div className="flex h-[41px] items-center pt-px pr-2">
          <ToolButton label="Dodaj" icon={<PlusIcon />} className="w-[37px]" />
          <ToolButton label="Edytuj" icon={<EditIcon />} className="w-[39px]" />
          <ToolButton label="Klonuj" icon={<CloneIcon />} className="w-[38px]" />
          <ToolButton label="Usuń" icon={<DeleteIcon />} className="w-[37px]" />
          <div className="ml-px flex h-[37px] rounded-[2px] border border-[#98a5bb] bg-linear-to-b from-[#f0f2f6] to-[#cfd6e2]">
            <ToolButton label="Info" icon={<InfoIcon />} className="w-[22px] pt-px" />
            <button type="button" aria-label="Więcej informacji" className="flex w-4 items-center justify-center border-l border-[#98a5bb]">
              <svg viewBox="0 0 7 4" className="h-1 w-[7px]"><path d="M0 0h7L3.500 4z" fill="#1e2a44" /></svg>
            </button>
          </div>
          <ToolButton label="Webik" icon={<LayersIcon />} className="w-[40px]" />
          <label htmlFor="active-only" className={`ml-[2px] flex items-center gap-[2px] text-[11px] ${toolText}`}>
            <CheckBox id="active-only" label="Aktywni" checked />
            Aktywni
          </label>
          <input aria-label="Szukaj kontrahenta" className="ml-7 h-[30px] w-[148px] border border-[#98a4b8] bg-white px-1 text-xs outline-none" />
          <button type="button" aria-label="Ustawienia" className="ml-[9px]"><GearIcon /></button>
          <span className="ml-auto flex items-center gap-[18px]">
            <button type="button" aria-label="Dopasuj okno"><SizeIcon /></button>
            <button type="button" aria-label="Odśwież listę"><RefreshIcon /></button>
            <button type="button" aria-label="Kolumny listy"><ListIcon /></button>
          </span>
        </div>

        <div className="flex">
          <GroupTree />
          <div className="flex w-[6px] items-center justify-center"><Grip /></div>
          <CustomerGrid />
          <div className="mb-[17px] flex w-4 flex-col items-center border-l border-[#d0d4dc] bg-[#e9eaec] py-[6px]">
            <svg viewBox="0 0 7 4" className="h-1 w-[7px]"><path d="M0 4h7L3.500 0z" fill="#7f8796" /></svg>
            <div className="mt-5 flex h-7 w-[14px] flex-col items-center justify-center gap-[2px] rounded-[2px] border border-[#a5adbb] bg-linear-to-r from-[#eef0f4] to-[#ccd2de]">
              {[0, 1, 2].map((n) => (
                <span key={n} className="h-px w-[7px] bg-[#727b8c]" />
              ))}
            </div>
            <svg viewBox="0 0 7 4" className="mt-auto h-1 w-[7px]"><path d="M0 0h7L3.500 4z" fill="#7f8796" /></svg>
          </div>
        </div>

        <footer className={`flex h-[41px] items-center justify-end gap-[29px] border border-[#98a5bb] pr-[38px] text-[11px] ${toolText}`}>
          <button type="button" className="flex h-[30px] w-[100px] items-center justify-center gap-1 rounded-[2px] border border-[#8d9ab0] bg-linear-to-b from-[#eef0f4] to-[#c8cfdd] shadow-[inset_0_0_0_1px_#f5e9c8]">
            <FindIcon />
            Wybierz
          </button>
          <button type="button" className="flex items-center gap-1">
            <CancelIcon />
            Anuluj
          </button>
        </footer>
      </div>
    </section>
  );
}

/* ---------- instruction marks ---------- */

const mark = "pointer-events-none absolute rounded-[6px] border-2 border-[#f80808] shadow-[0_2px_5px_rgba(0,0,0,0.35),inset_0_2px_5px_rgba(0,0,0,0.15)]";
const dot = "pointer-events-none absolute flex size-[29px] items-center justify-center rounded-full border-2 border-[#f01010] bg-[#c4161c]/95 text-base text-white shadow-[1px_2px_4px_rgba(0,0,0,0.5)]";

function Marks() {
  return (
    <>
      <div className={`top-[161px] left-[24px] h-[36px] w-[117px] ${mark}`} />
      <div className={`top-[163px] left-[133px] ${dot}`}>1</div>
      <div className={`top-[80px] left-[428px] h-[43px] w-[58px] ${mark}`} />
      <div className={`top-[121px] left-[451px] ${dot}`}>3</div>
      <div className={`top-[484px] left-[348px] h-[21px] w-[580px] ${mark}`} />
      <svg viewBox="0 0 200 210" className="pointer-events-none absolute top-[119px] left-[271px] h-[210px] w-[200px] drop-shadow-[2px_3px_3px_rgba(0,0,0,0.4)]">
        <path d="M187 3 25 184" stroke="#ff0000" strokeWidth="4" />
        <path d="M10 203 18.500 180 25 184 31.500 191z" fill="#ff0000" stroke="#ff0000" />
      </svg>
    </>
  );
}

export default function App() {
  return (
    <div className="relative flex min-h-screen flex-col border border-[#232b40] bg-[#dce1ea] font-['DejaVu_Sans_Condensed','Noto_Sans',sans-serif]">
      <TitleBar />
      <MenuBar />

      <main className="mr-2 ml-[7px] flex flex-1 border-t border-white bg-[#bbc7d8]">
        <Sidebar />
        <div className="flex w-[7px] shrink-0 items-center justify-center"><Grip /></div>
        <div className="flex min-w-0 flex-1 flex-col">
          <Tabs />
          <div className="flex flex-1 flex-col border-x border-t-4 border-x-[#98a5bb] border-t-[#ffe5a0]">
            <Toolbar />
            <div className="h-[38px] border-b border-[#b0bbce] bg-[#c8d1e3] pl-2 text-xs leading-[38px] text-[#97a3b8]">Panel grupowania</div>
            <DocTable />
            <div className="min-h-6 flex-1 bg-white" />
            <div className="h-9 border-t border-[#b8c2d4] bg-linear-to-b from-[#eceff3] to-[#d9dde6]" />
            <div className="h-8" />
            <Details />
            <button type="button" className={`flex h-[26px] flex-col items-center text-[11px] leading-[14px] tracking-[3px] ${toolText}`}>
              <svg viewBox="0 0 14 2" className="mt-[2px] h-[2px] w-[14px]"><path d="M0 1h14" stroke="#8391ab" strokeWidth="2" strokeDasharray="2 2" /></svg>
              <span className="mt-1">UKRYJ SZCZEGÓŁY [F8]</span>
            </button>
            <div className="h-[5px] border-b border-[#98a5bb] bg-[#ffe5a0]" />
          </div>
        </div>
      </main>

      <footer className="mr-2 mb-2 ml-[7px] grid h-4 grid-cols-[381fr_383fr_381fr_140fr] bg-linear-to-b from-[#eceff3] to-[#d8dde6] text-[11px] leading-4 whitespace-nowrap text-[#4c5870]">
        <span className="pl-1">Copyright © 2005-2024 RHO Software</span>
        <span className="border-l border-[#cfd5df] pl-1">Modus demo v.5.0.0.531</span>
        <span className="border-l border-[#cfd5df] pl-1">Nr licencji: 2223/111111111111111</span>
        <span className="border-l border-[#cfd5df] pr-1 text-right">2024-12-11,&nbsp; 12:24:18</span>
      </footer>

      <div className={`top-[261px] right-[136px] left-[199px] h-[27px] ${mark}`} />
      <div className={`top-[258px] left-[182px] ${dot}`}>2</div>
      <CustomerDialog />
      <Marks />
    </div>
  );
}
